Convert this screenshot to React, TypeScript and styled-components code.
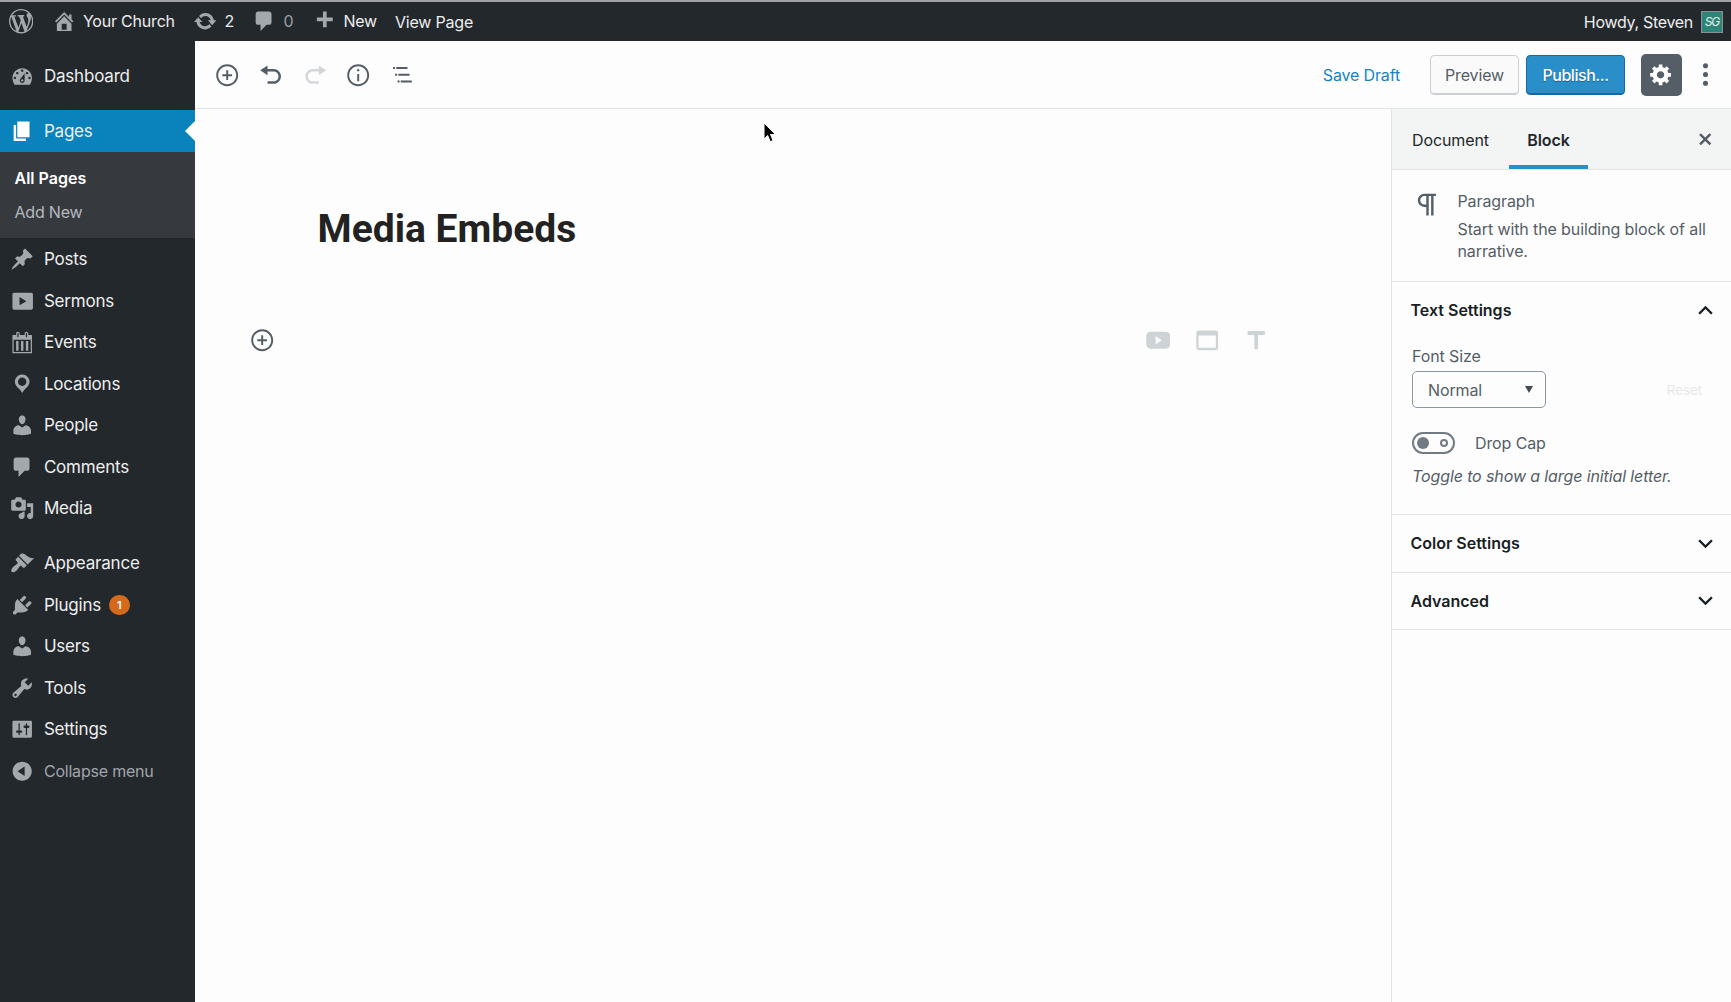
import { Fragment } from "react";
import styled, { createGlobalStyle } from "styled-components";

const icons = {
  wordpress:
    "M20 10c0-5.51-4.49-10-10-10C4.48 0 0 4.49 0 10c0 5.52 4.48 10 10 10 5.51 0 10-4.48 10-10zM7.78 15.37L4.37 6.22c.55-.02 1.17-.08 1.17-.08.5-.06.44-1.13-.06-1.11 0 0-1.45.11-2.37.11-.18 0-.37 0-.58-.01C4.12 2.69 6.87 1.11 10 1.11c2.33 0 4.45.87 6.05 2.34-.68-.11-1.65.39-1.65 1.58 0 .74.45 1.36.9 2.1.35.61.55 1.36.55 2.46 0 1.49-1.4 5-1.4 5l-3.03-8.37c.54-.02.82-.17.82-.17.5-.05.44-1.25-.06-1.22 0 0-1.44.12-2.38.12-.87 0-2.33-.12-2.33-.12-.5-.03-.56 1.2-.06 1.22l.92.08 1.26 3.41zM17.41 10c.24-.64.74-1.87.43-4.25.7 1.29 1.05 2.71 1.05 4.25 0 3.29-1.73 6.24-4.4 7.78.97-2.59 1.94-5.2 2.92-7.78zM6.1 18.09C3.12 16.65 1.11 13.53 1.11 10c0-1.3.23-2.48.72-3.59C3.25 10.3 4.67 14.2 6.1 18.09zm4.03-6.63l2.58 6.98c-.86.29-1.76.45-2.71.45-.79 0-1.57-.11-2.29-.33.81-2.38 1.62-4.74 2.42-7.1z",
  home: "M16 8.5l1.53 1.53-1.06 1.06L10 4.6l-6.47 6.49-1.06-1.06L10 2.5l4 4v-2h2v4zm-6-2.46l6 5.99V18H4v-5.97zM12 17v-5H8v5h4z",
  update:
    "M10.2 3.28c3.53 0 6.43 2.61 6.92 6h2.08l-3.5 4-3.5-4h2.32c-.45-1.97-2.21-3.45-4.32-3.45-1.45 0-2.73.71-3.54 1.78L4.95 5.66C6.23 4.2 8.11 3.28 10.2 3.28zm-.4 13.44c-3.52 0-6.43-2.61-6.92-6H.8l3.5-4c1.17 1.33 2.33 2.67 3.5 4H5.48c.45 1.97 2.21 3.45 4.32 3.45 1.45 0 2.73-.71 3.54-1.78l1.71 1.95c-1.28 1.46-3.15 2.38-5.25 2.38z",
  comments:
    "M5 2h9c1.1 0 2 .9 2 2v7c0 1.1-.9 2-2 2h-2l-5 5v-5H5c-1.1 0-2-.9-2-2V4c0-1.1.9-2 2-2z",
  plus: "M17 7v3h-5v5H9v-5H4V7h5V2h3v5h5z",
  dashboard:
    "M3.76 17h12.48c1.1-1.37 1.76-3.61 1.76-5.5 0-4.42-3.58-8-8-8s-8 3.58-8 8c0 1.89.66 4.13 1.76 5.5zM10 4.5c.55 0 1 .45 1 1s-.45 1-1 1-1-.45-1-1 .45-1 1-1zM6 6.5c.55 0 1 .45 1 1s-.45 1-1 1-1-.45-1-1 .45-1 1-1zm8 0c.55 0 1 .45 1 1s-.45 1-1 1-1-.45-1-1 .45-1 1-1zm-5.37 5.55L12 7.5v6c0 1.1-.9 2-2 2s-2-.9-2-2c0-.57.24-1.08.63-1.45zM4 10.5c.55 0 1 .45 1 1s-.45 1-1 1-1-.45-1-1 .45-1 1-1zm12 0c.55 0 1 .45 1 1s-.45 1-1 1-1-.45-1-1 .45-1 1-1zm-5 3c0-.55-.45-1-1-1s-1 .45-1 1 .45 1 1 1 1-.45 1-1z",
  page: "M6 15V2h10v13H6zm-1 1h8v2H3V5h2v11z",
  post: "M10.44 3.02l1.82-1.82 6.36 6.35-1.83 1.82c-1.05-.68-2.48-.57-3.41.36l-.75.75c-.92.93-1.04 2.35-.35 3.41l-1.83 1.82-2.41-2.41-2.8 2.79c-.42.42-3.38 2.71-3.8 2.29s1.86-3.39 2.28-3.81l2.79-2.79L4.1 9.36l1.83-1.82c1.05.69 2.48.57 3.4-.36l.75-.75c.93-.92 1.05-2.35.36-3.41z",
  video:
    "M18.8 15.6V4.4c0-.8-.6-1.4-1.4-1.4H3.4c-.8 0-1.4.6-1.4 1.4v11.2c0 .8.6 1.4 1.4 1.4h14c.8 0 1.400-.6 1.400-1.400zM7.800 13.400V6.600l5.600 3.400z",
  calendar:
    "M15 4h3v15H2V4h3V3c0-.41.15-.76.44-1.06.29-.29.65-.44 1.06-.44s.77.15 1.06.44c.29.3.44.65.44 1.06v1h4V3c0-.41.15-.76.44-1.06.29-.29.65-.44 1.06-.44s.77.15 1.06.44c.29.3.44.65.44 1.06v1zM6 3v2.5c0 .14.05.26.15.36.09.09.21.14.35.14s.26-.05.35-.14c.1-.1.15-.22.15-.36V3c0-.14-.05-.26-.15-.35-.09-.1-.21-.15-.35-.15s-.26.05-.35.15c-.1.09-.15.21-.15.35zm7 0v2.5c0 .14.05.26.14.36.1.09.22.14.36.14s.26-.05.36-.14c.09-.1.14-.22.14-.36V3c0-.14-.05-.26-.14-.35-.1-.1-.22-.15-.36-.15s-.26.05-.36.15c-.09.09-.14.21-.14.35zm4 15V8H3v10h14zM7 9v8H5V9h2zm4 0v8H9V9h2zm4 0v8h-2V9h2z",
  location:
    "M10 2C6.69 2 4 4.69 4 8c0 2.02 1.17 3.71 2.53 4.89.43.37 1.18.96 1.85 1.83.74.97 1.41 2.01 1.62 2.71.21-.7.88-1.74 1.62-2.71.67-.87 1.42-1.46 1.85-1.83C14.83 11.71 16 10.02 16 8c0-3.31-2.69-6-6-6zm0 2.56c1.9 0 3.44 1.54 3.44 3.44S11.9 11.44 10 11.44 6.56 9.9 6.56 8 8.1 4.56 10 4.56z",
  user: "M10 9.25c-2.27 0-2.73-3.44-2.73-3.44C7 4.02 7.82 2 9.97 2c2.16 0 2.98 2.02 2.71 3.81 0 0-.41 3.44-2.68 3.44zm0 2.57L12.72 10c2.39 0 4.52 2.33 4.52 4.53v2.49s-3.65 1.13-7.24 1.13c-3.65 0-7.24-1.13-7.24-1.13v-2.49c0-2.25 1.94-4.48 4.47-4.48z",
  media:
    "M13 11V4c0-.55-.45-1-1-1h-1.67L9 1H5L3.67 3H2c-.55 0-1 .45-1 1v7c0 .55.45 1 1 1h10c.55 0 1-.45 1-1zM7 4.5c1.38 0 2.5 1.12 2.5 2.5S8.38 9.5 7 9.5 4.5 8.38 4.5 7 5.62 4.5 7 4.5zM14 6h5v10.5c0 1.38-1.12 2.5-2.5 2.5S14 17.88 14 16.5s1.12-2.5 2.5-2.5c.17 0 .34.02.5.05V9h-3V6zm-4 8.05V13h2v3.5c0 1.38-1.12 2.5-2.5 2.5S7 17.88 7 16.5 8.12 14 9.5 14c.17 0 .34.02.5.05z",
  appearance:
    "M14.48 11.06L7.41 3.99l1.5-1.5c.5-.56 2.3-.47 3.51.32 1.21.8 1.43 1.28 2.91 2.1 1.18.64 2.45 1.26 4.45.85zm-.71.71L6.7 4.7 4.93 6.47c-.39.39-.39 1.02 0 1.41l1.06 1.06c.39.39.39 1.03 0 1.42-.6.6-1.43 1.11-2.21 1.69-.35.26-.7.53-1.01.84C1.43 14.23.4 16.08 1.4 17.07c.99 1 2.84-.03 4.18-1.36.31-.31.58-.66.85-1.02.57-.78 1.08-1.61 1.69-2.21.39-.39 1.02-.39 1.41 0l1.06 1.06c.39.39 1.02.39 1.41 0z",
  plugins:
    "M13.11 4.36L9.87 7.6 8 5.73l3.24-3.24c.35-.34 1.05-.2 1.56.32.52.51.66 1.21.31 1.55zm-8 1.77l.91-1.12 9.01 9.01-1.19.84c-.71.71-2.63 1.16-3.82 1.16H6.14L4.9 17.26c-.59.59-1.54.59-2.12 0-.59-.58-.59-1.53 0-2.12l1.24-1.24v-3.88c0-1.13.4-3.19 1.09-3.89zm7.26 3.97l3.24-3.24c.34-.35 1.04-.21 1.55.31.52.51.66 1.21.31 1.55l-3.24 3.25z",
  tools:
    "M16.68 9.77c-1.34 1.34-3.3 1.67-4.95.99l-5.41 6.52c-.99.99-2.59.99-3.58 0s-.99-2.59 0-3.57l6.52-5.42c-.68-1.65-.35-3.61.99-4.95 1.28-1.28 3.12-1.62 4.72-1.06l-2.89 2.89 2.82 2.82 2.86-2.87c.53 1.58.18 3.39-1.08 4.65zM3.81 16.21c.4.39 1.04.39 1.43 0 .4-.4.4-1.04 0-1.43-.39-.4-1.03-.4-1.43 0-.39.39-.39 1.03 0 1.43z",
  settings:
    "M18 16V4c0-.55-.45-1-1-1H3c-.55 0-1 .45-1 1v12c0 .55.45 1 1 1h14c.55 0 1-.45 1-1zM8 11h1c.55 0 1 .45 1 1s-.45 1-1 1H8v1.5c0 .28-.22.5-.5.5s-.5-.22-.5-.5V13H6c-.55 0-1-.45-1-1s.45-1 1-1h1V5.5c0-.28.22-.5.5-.5s.5.22.5.5V11zm5-2h-1c-.55 0-1-.45-1-1s.45-1 1-1h1V5.5c0-.28.22-.5.5-.5s.5.22.5.5V7h1c.55 0 1 .45 1 1s-.45 1-1 1h-1v5.5c0 .28-.22.5-.5.5s-.5-.22-.5-.5V9z",
  collapse:
    "M10 2.16c4.33 0 7.84 3.51 7.84 7.84s-3.51 7.84-7.84 7.84S2.16 14.33 2.16 10 5.71 2.16 10 2.16zm2 11.72V6.12L6.18 9.97z",
  insert:
    "M10 1c-5 0-9 4-9 9s4 9 9 9 9-4 9-9-4-9-9-9zm0 16.4c-4.1 0-7.4-3.3-7.4-7.4s3.3-7.4 7.4-7.4 7.4 3.3 7.4 7.4-3.3 7.4-7.4 7.4zm.8-11.4H9.2v3.2H6v1.6h3.2v3.2h1.6v-3.2h3.2V9.2h-3.2V6z",
  undo: "M12 5H7V2L1 6l6 4V7h5c2.2 0 4 1.8 4 4s-1.8 4-4 4H7v2h5c3.3 0 6-2.7 6-6s-2.7-6-6-6z",
  redo: "M8 5h5V2l6 4-6 4V7H8c-2.2 0-4 1.8-4 4s1.8 4 4 4h5v2H8c-3.3 0-6-2.7-6-6s2.7-6 6-6z",
  info: "M9.2 15h1.6V9H9.2v6zm.8-10c-.5 0-1 .5-1 1s.5 1 1 1 1-.5 1-1-.5-1-1-1zm0-4c-5 0-9 4-9 9s4 9 9 9 9-4 9-9-4-9-9-9zm0 16.4c-4.1 0-7.4-3.3-7.4-7.4s3.3-7.4 7.4-7.4 7.4 3.3 7.4 7.4-3.3 7.4-7.4 7.4z",
  gear: "M18 12h-2.18c-.17.7-.44 1.35-.81 1.93l1.54 1.54-2.1 2.1-1.54-1.54c-.58.36-1.23.63-1.91.79V19H8v-2.18c-.68-.16-1.33-.43-1.91-.79l-1.54 1.54-2.12-2.12 1.54-1.54c-.36-.58-.63-1.23-.79-1.91H1V9.03h2.17c.16-.7.44-1.35.8-1.94L2.43 5.55l2.1-2.1 1.54 1.54c.58-.37 1.24-.64 1.93-.81V2h3v2.18c.68.16 1.33.43 1.91.79l1.54-1.54 2.12 2.12-1.54 1.54c.36.59.64 1.24.8 1.94H18V12zm-8.5 1.5c1.66 0 3-1.34 3-3s-1.34-3-3-3-3 1.34-3 3 1.34 3 3 3z",
  close:
    "M14.95 6.46L11.41 10l3.54 3.54-1.41 1.41L10 11.42l-3.53 3.53-1.42-1.42L8.58 10 5.05 6.47l1.42-1.42L10 8.58l3.54-3.53z",
};

// these come from the 24px grid
const wideIcons = {
  outline:
    "M3 4h2v2H3zM6.200 4h11v2h-11zM5 10.600h2v2H5zM8.200 10.600h11v2h-11zM7.400 17.200h2v2h-2zM10.500 17.200h11v2h-11z",
  dots: "M12 2.7a2.1 2.1 0 1 0 0 4.2 2.1 2.1 0 0 0 0-4.200zM12 9.900a2.100 2.100 0 1 0 0 4.200 2.100 2.100 0 0 0 0-4.200zM12 17.100a2.100 2.100 0 1 0 0 4.200 2.100 2.100 0 0 0 0-4.200z",
  paragraph:
    "M11 5v7H9.5C7.6 12 6 10.4 6 8.5S7.6 5 9.5 5H11m8-2H9.5C6.5 3 4 5.5 4 8.5S6.5 14 9.5 14H11v7h2V5h2v16h2V5h2V3z",
  up: "M12,8l-6,6l1.41,1.41L12,10.83l4.59,4.58L18,14L12,8z",
  down: "M7.41,8.59L12,13.17l4.59-4.58L18,10l-6,6l-6-6L7.41,8.59z",
  youtube:
    "M4.5 3.600h15A4 4 0 0 1 23.700 7.600v8.800a4 4 0 0 1-4.200 4h-15A4 4 0 0 1 .3 16.400V7.600a4 4 0 0 1 4.200-4zM9.500 8v8l6-4z",
  window:
    "M3.500 2.500h17A2.300 2.300 0 0 1 22.700 4.800v14.700a2.300 2.300 0 0 1-2.200 2.300h-17a2.300 2.300 0 0 1-2.200-2.300V4.800a2.300 2.300 0 0 1 2.200-2.300zM3.500 7.500v12h17v-12z",
  text: "M3.500 3h17v4h-6.700v14h-3.600V7H3.500z",
};

const Icon = ({ name, size = 24.4 }: { name: string; size?: number }) => {
  const wide = name in wideIcons;
  const d = wide ? (wideIcons as any)[name] : (icons as any)[name];
  return (
    <IconSvg
      width={size}
      height={size}
      viewBox={wide ? "0 0 24 24" : "0 0 20 20"}
      fillRule={wide ? "evenodd" : "nonzero"}
    >
      <path d={d} />
    </IconSvg>
  );
};

const menu = [
  { icon: "dashboard", label: "Dashboard" },
  { icon: "page", label: "Pages", current: true, gap: true },
  { icon: "post", label: "Posts" },
  { icon: "video", label: "Sermons" },
  { icon: "calendar", label: "Events" },
  { icon: "location", label: "Locations" },
  { icon: "user", label: "People" },
  { icon: "comments", label: "Comments" },
  { icon: "media", label: "Media" },
  { icon: "appearance", label: "Appearance", gap: true },
  { icon: "plugins", label: "Plugins", count: 1 },
  { icon: "user", label: "Users" },
  { icon: "tools", label: "Tools" },
  { icon: "settings", label: "Settings" },
  { icon: "collapse", label: "Collapse menu", muted: true },
];

const App = () => {
  return (
    <Page>
      <GlobalStyle />
      <AdminBar>
        <BarItem $width={42.5}>
          <Icon name="wordpress" />
        </BarItem>
        <BarItem $width={141} $gap={7}>
          <Icon name="home" />
          Your Church
        </BarItem>
        <BarItem $width={59} $gap={7.5}>
          <Icon name="update" />2
        </BarItem>
        <BarItem $width={60} $gap={7.5} $muted>
          <Icon name="comments" />0
        </BarItem>
        <BarItem $width={83.5} $gap={7.5}>
          <Icon name="plus" />
          New
        </BarItem>
        <BarItem>View Page</BarItem>
        <Account>
          Howdy, Steven
          <Avatar>SG</Avatar>
        </Account>
      </AdminBar>

      <Body>
        <SideMenu>
          {menu.map((item) => (
            <Fragment key={item.label}>
              <MenuItem
                $current={item.current}
                $muted={item.muted}
                $gap={item.gap}
              >
                <Icon name={item.icon} />
                <span className="label">{item.label}</span>
                {item.count && <Count>{item.count}</Count>}
                {item.current && <Notch />}
              </MenuItem>
              {item.current && (
                <SubMenu>
                  <li className="active">All Pages</li>
                  <li>Add New</li>
                </SubMenu>
              )}
            </Fragment>
          ))}
        </SideMenu>

        <Editor>
          <Toolbar>
            <ToolButton>
              <Icon name="insert" />
            </ToolButton>
            <ToolButton>
              <Icon name="undo" />
            </ToolButton>
            <ToolButton $disabled>
              <Icon name="redo" />
            </ToolButton>
            <ToolButton>
              <Icon name="info" />
            </ToolButton>
            <ToolButton>
              <Icon name="outline" />
            </ToolButton>
            <ToolbarRight>
              <SaveDraft>Save Draft</SaveDraft>
              <PreviewButton>Preview</PreviewButton>
              <PublishButton>Publish...</PublishButton>
              <GearButton>
                <Icon name="gear" />
              </GearButton>
              <MoreButton>
                <Icon name="dots" size={29} />
              </MoreButton>
            </ToolbarRight>
          </Toolbar>

          <Workspace>
            <Canvas>
              <Title>Media Embeds</Title>
              <BlockRow>
                <ToolButton>
                  <Icon name="insert" />
                </ToolButton>
                <Shortcuts>
                  <Icon name="youtube" />
                  <Icon name="window" />
                  <Icon name="text" />
                </Shortcuts>
              </BlockRow>
            </Canvas>

            <Inspector>
              <Tabs>
                <Tab>Document</Tab>
                <Tab $active>Block</Tab>
                <CloseButton>
                  <Icon name="close" />
                </CloseButton>
              </Tabs>
              <BlockCard>
                <Icon name="paragraph" size={29} />
                <div>
                  <div className="name">Paragraph</div>
                  <div className="description">
                    Start with the building block of all narrative.
                  </div>
                </div>
              </BlockCard>
              <Panel>
                <PanelTitle>
                  Text Settings
                  <Icon name="up" size={29} />
                </PanelTitle>
                <FieldLabel>Font Size</FieldLabel>
                <FontSizeRow>
                  <Select>
                    Normal
                    <svg width="8" height="7" viewBox="0 0 8 7">
                      <path d="M0 0h8L4 7z" />
                    </svg>
                  </Select>
                  <Reset>Reset</Reset>
                </FontSizeRow>
                <ToggleRow>
                  <Toggle>
                    <i className="knob" />
                    <i className="ring" />
                  </Toggle>
                  Drop Cap
                </ToggleRow>
                <Help>Toggle to show a large initial letter.</Help>
              </Panel>
              <Panel>
                <PanelTitle>
                  Color Settings
                  <Icon name="down" size={29} />
                </PanelTitle>
              </Panel>
              <Panel>
                <PanelTitle>
                  Advanced
                  <Icon name="down" size={29} />
                </PanelTitle>
              </Panel>
            </Inspector>
          </Workspace>
        </Editor>
      </Body>

      <Cursor width="16" height="24" viewBox="0 0 16 24">
        <path
          d="M1 1v16l3.7-3.5 2.6 6.2 2.8-1.2-2.6-6H12.500z"
          fill="#000"
          stroke="#fff"
          strokeWidth="1"
        />
      </Cursor>
    </Page>
  );
};

export default App;

const GlobalStyle = createGlobalStyle`
  * {
    box-sizing: border-box;
  }
  body {
    margin: 0;
    font-family: Inter, "Liberation Sans", sans-serif;
  }
  ul {
    margin: 0;
    padding: 0;
    list-style: none;
  }
`;

const Page = styled.div`
  display: flex;
  flex-direction: column;
  width: 1731px;
  height: 1002px;
  overflow: hidden;
  background: #fdfdfd;
`;

const IconSvg = styled.svg`
  flex: none;
  display: block;
  fill: currentColor;
`;

const AdminBar = styled.header`
  flex: none;
  display: flex;
  align-items: center;
  height: 41px;
  padding: 0 8px 0 9px;
  border-top: 2px solid #a0a1a5;
  background: #23282d;
  color: #eee;
  font-size: 16px;
  letter-spacing: -0.2px;
`;

const BarItem = styled.div<{
  $width?: number;
  $gap?: number;
  $muted?: boolean;
}>`
  display: flex;
  align-items: center;
  gap: ${({ $gap }) => $gap || 0}px;
  width: ${({ $width }) => ($width ? `${$width}px` : "auto")};
  color: ${({ $muted }) => ($muted ? "#9a9ea2" : "#eee")};
  white-space: nowrap;
  svg {
    color: #a3a8ac;
  }
`;

const Account = styled.div`
  display: flex;
  align-items: center;
  gap: 8px;
  margin-left: auto;
  letter-spacing: -0.3px;
`;

const Avatar = styled.span`
  display: flex;
  align-items: center;
  justify-content: center;
  width: 22px;
  height: 22px;
  border: 1px solid #8c9094;
  background: #2c8577;
  color: #e6f2f0;
  font-size: 12px;
  font-style: italic;
  letter-spacing: -1px;
`;

const Body = styled.div`
  flex: 1;
  display: flex;
  min-height: 0;
`;

const SideMenu = styled.nav`
  flex: none;
  width: 195px;
  padding-top: 14px;
  background: #23282d;
`;

const MenuItem = styled.div<{
  $current?: boolean;
  $muted?: boolean;
  $gap?: boolean;
}>`
  position: relative;
  display: flex;
  align-items: center;
  height: 41.5px;
  margin-top: ${({ $gap }) => ($gap ? "13.5px" : "0")};
  padding: 1px 0 0 9.5px;
  background: ${({ $current }) => ($current ? "#0a82bb" : "transparent")};
  color: ${({ $muted }) => ($muted ? "#a0a5aa" : "#eee")};
  font-size: ${({ $muted }) => ($muted ? "16px" : "17px")};
  letter-spacing: -0.2px;
  svg {
    color: ${({ $current }) => ($current ? "#fff" : "#a3a8ac")};
  }
  .label {
    margin-left: 10px;
  }
`;

const Count = styled.span`
  display: flex;
  align-items: center;
  justify-content: center;
  width: 20.5px;
  height: 20.5px;
  margin-left: 8px;
  border-radius: 50%;
  background: #d56a1c;
  color: #fff;
  font-size: 11px;
  font-weight: 600;
`;

const Notch = styled.i`
  position: absolute;
  right: 0;
  top: 50%;
  margin-top: -10px;
  border: 10px solid transparent;
  border-left: 0;
  border-right-color: #fdfdfd;
`;

const SubMenu = styled.ul`
  height: 86.5px;
  padding: 9px 14.5px;
  background: #363a3f;
  color: #b4b9be;
  font-size: 16px;
  line-height: 34.4px;
  letter-spacing: -0.2px;
  .active {
    color: #fff;
    font-weight: 600;
    letter-spacing: 0;
  }
`;

const Editor = styled.main`
  flex: 1;
  display: flex;
  flex-direction: column;
  min-width: 0;
`;

const Toolbar = styled.div`
  flex: none;
  display: flex;
  align-items: center;
  height: 68px;
  padding: 1px 11px 0 10px;
  border-bottom: 1px solid #e2e4e7;
`;

const ToolButton = styled.span<{ $disabled?: boolean }>`
  display: flex;
  align-items: center;
  justify-content: center;
  width: 43.9px;
  height: 44px;
  color: ${({ $disabled }) => ($disabled ? "#d3d7da" : "#555d66")};
`;

const ToolbarRight = styled.div`
  display: flex;
  align-items: center;
  height: 42px;
  margin: -1px 0 0 auto;
  font-size: 16px;
  letter-spacing: -0.15px;
`;

const SaveDraft = styled.span`
  margin-right: 30px;
  color: #1484c4;
`;

const PreviewButton = styled.span`
  display: flex;
  align-items: center;
  justify-content: center;
  width: 89px;
  height: 40px;
  margin-right: 7px;
  border: 1px solid #ccd0d4;
  border-radius: 4px;
  box-shadow: inset 0 -1px 0 #ccd0d4;
  background: #fafafa;
  color: #555d66;
`;

const PublishButton = styled.span`
  display: flex;
  align-items: center;
  justify-content: center;
  width: 99px;
  height: 40px;
  margin-right: 16px;
  border: 1px solid #1b68a0;
  border-radius: 4px;
  box-shadow: inset 0 -1px 0 #1b68a0;
  background: #2a8fc9;
  color: #fff;
  font-weight: 500;
  letter-spacing: -0.45px;
  text-shadow: 0 1px 1px #1b5f8f;
`;

const GearButton = styled.span`
  display: flex;
  align-items: center;
  justify-content: center;
  width: 41px;
  height: 42px;
  border-radius: 5px;
  background: #555d66;
  color: #fff;
`;

const MoreButton = styled.span`
  display: flex;
  margin-left: 9px;
  color: #555d66;
`;

const Workspace = styled.div`
  flex: 1;
  display: flex;
  min-height: 0;
`;

const Canvas = styled.div`
  flex: 1;
  padding: 97px 123px 0 45px;
`;

const Title = styled.h1`
  margin: 0 0 0 77.5px;
  color: #222;
  font-family: Roboto, sans-serif;
  font-size: 39px;
  font-weight: 700;
  line-height: 46px;
`;

const BlockRow = styled.div`
  display: flex;
  align-items: center;
  justify-content: space-between;
  margin-top: 66.5px;
`;

const Shortcuts = styled.div`
  display: flex;
  gap: 24.4px;
  color: #ced3d6;
`;

const Inspector = styled.aside`
  flex: none;
  width: 340px;
  border-left: 1px solid #e2e4e7;
  color: #555d66;
  font-size: 16px;
  letter-spacing: -0.11px;
`;

const Tabs = styled.div`
  display: flex;
  height: 61px;
  padding-right: 13.5px;
  border-bottom: 1px solid #e2e4e7;
  background: #f3f4f4;
  color: #23282d;
`;

const Tab = styled.span<{ $active?: boolean }>`
  display: flex;
  align-items: center;
  justify-content: center;
  width: ${({ $active }) => ($active ? "79px" : "117px")};
  padding-top: ${({ $active }) => ($active ? "6px" : "2px")};
  border-bottom: ${({ $active }) => ($active ? "4px solid #2290cb" : "0")};
  font-weight: ${({ $active }) => ($active ? 600 : 400)};
`;

const CloseButton = styled.span`
  display: flex;
  align-items: center;
  margin-left: auto;
  padding-top: 1px;
  color: #555d66;
`;

const BlockCard = styled.div`
  display: flex;
  gap: 16px;
  height: 111px;
  padding: 20px 15px 0 20.5px;
  .name {
    line-height: 22px;
  }
  .description {
    width: 256px;
    margin-top: 6px;
    line-height: 22px;
  }
`;

const Panel = styled.section`
  padding: 0 20px;
  border-top: 1px solid #e2e4e7;
  &:last-child {
    border-bottom: 1px solid #e2e4e7;
  }
`;

const PanelTitle = styled.div`
  display: flex;
  align-items: center;
  justify-content: space-between;
  height: 56.5px;
  margin: 0 -9px 0 -1.5px;
  color: #191e23;
  font-weight: 600;
  letter-spacing: 0;
`;

const FieldLabel = styled.div`
  margin-top: 6.5px;
  line-height: 22px;
`;

const FontSizeRow = styled.div`
  display: flex;
  align-items: center;
  justify-content: space-between;
  margin-top: 4px;
`;

const Select = styled.div`
  display: flex;
  align-items: center;
  justify-content: space-between;
  width: 134px;
  height: 37px;
  padding: 0 12px 0 15px;
  border: 1px solid #8d96a0;
  border-radius: 5px;
  svg {
    fill: #444b52;
  }
`;

const Reset = styled.span`
  margin-right: 9px;
  color: #e6e8ea;
  font-size: 13.5px;
`;

const ToggleRow = styled.div`
  display: flex;
  align-items: center;
  gap: 20px;
  margin-top: 24px;
`;

const Toggle = styled.span`
  display: flex;
  align-items: center;
  justify-content: space-between;
  width: 43px;
  height: 22px;
  padding: 0 5px 0 3px;
  border: 2px solid #727b82;
  border-radius: 11px;
  .knob {
    width: 12px;
    height: 12px;
    border-radius: 50%;
    background: #727b82;
  }
  .ring {
    width: 8px;
    height: 8px;
    border: 2px solid #727b82;
    border-radius: 50%;
  }
`;

const Help = styled.p`
  margin: 11px 0 27px;
  font-style: italic;
  line-height: 22px;
  white-space: nowrap;
`;

const Cursor = styled.svg`
  position: absolute;
  left: 763px;
  top: 121.5px;
`;
